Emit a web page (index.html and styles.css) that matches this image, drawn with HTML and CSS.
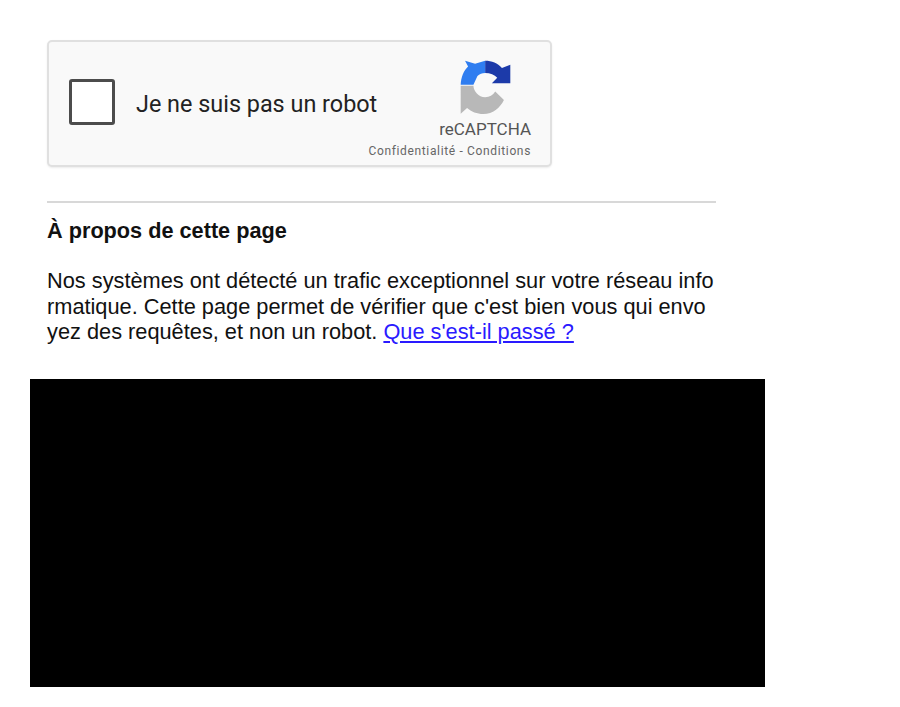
FILE: index.html
```html
<!DOCTYPE html>
<html lang="fr">
<head>
<meta charset="utf-8">
<title>À propos de cette page</title>
<link rel="stylesheet" href="styles.css">
</head>
<body>
<main class="page">
  <div class="captcha">
    <div class="check"></div>
    <div class="label">Je ne suis pas un robot</div>
    <div class="brand">
      <svg class="logo" viewBox="60 25 155 170" aria-hidden="true">
        <path fill="#b8b8b8" d="M62 108H100C101 125 115 142 135 142C148 142 158 136 165 125L191 150C179 174 158 192 130 192C110 192 94 185 81 174L62 191Z"/>
        <path fill="#2f7df0" d="M62 105C63 82 71 62 84 50L75 33L105 42L135 33V70C126 70 118 73 112 79L100 105Z"/>
        <path fill="#1c3aa9" d="M135 33C155 33 172 40 185 55L210 45V100H155L171 84C163 76 150 70 135 70Z"/>
      </svg>
      <div class="name">reCAPTCHA</div>
      <div class="links">Confidentialité - Conditions</div>
    </div>
  </div>
  <hr class="rule">
  <h1 class="title">À propos de cette page</h1>
  <p class="text">Nos systèmes ont détecté un trafic exceptionnel sur votre réseau informatique. Cette page permet de vérifier que c'est bien vous qui envoyez des requêtes, et non un robot. <a href="#" class="link">Que s'est-il passé ?</a></p>
  <div class="block"></div>
</main>
</body>
</html>
```
FILE: styles.css
```css
html, body {
  margin: 0;
  padding: 0;
  background: #fff;
}
.page {
  padding: 40px 0 0 30px;
  font-family: "Liberation Sans", Arial, sans-serif;
  color: #111;
}
.captcha {
  box-sizing: border-box;
  width: 505px;
  height: 127px;
  margin-left: 17px;
  display: flex;
  align-items: center;
  padding: 0 20px 2px 20px;
  background: #f9f9f9;
  border: 2px solid #e0e0e0;
  border-radius: 5px;
  box-shadow: 0 1px 2px rgba(0, 0, 0, .08);
}
.check {
  flex: none;
  box-sizing: border-box;
  width: 46px;
  height: 46px;
  margin-top: -2px;
  background: #fff;
  border: 3px solid #4c4c4c;
  border-radius: 3px;
}
.label {
  flex: none;
  margin: 2px -20px 0 21px;
  font: 23.4px Roboto, sans-serif;
  color: #222;
  white-space: nowrap;
}
.brand {
  flex: none;
  margin-left: auto;
  margin-right: -1px;
  margin-top: 11px;
  display: flex;
  flex-direction: column;
  align-items: flex-end;
}
.logo {
  width: 52px;
  height: 57px;
  margin-right: 19px;
  filter: blur(.5px);
}
.name {
  margin-top: 3px;
  font: 17px/22px Roboto, sans-serif;
  color: #555;
}
.links {
  margin-top: 3px;
  font: 12px/16px Roboto, sans-serif;
  letter-spacing: .65px;
  color: #666;
  white-space: nowrap;
}
.rule {
  box-sizing: border-box;
  width: 669px;
  height: 2px;
  margin: 34px 0 0 17px;
  border: 0;
  background: #d8d8d8;
}
.title {
  margin: 15px 0 0 17px;
  font-size: 21.7px;
  line-height: 26px;
  font-weight: bold;
}
.text {
  width: 668px;
  margin: 24px 0 0 17px;
  font-size: 21.77px;
  line-height: 25.5px;
  word-break: break-all;
}
.link {
  color: #2a1aff;
}
.block {
  width: 735px;
  height: 308px;
  margin-top: 34px;
  background: #000;
}
```
